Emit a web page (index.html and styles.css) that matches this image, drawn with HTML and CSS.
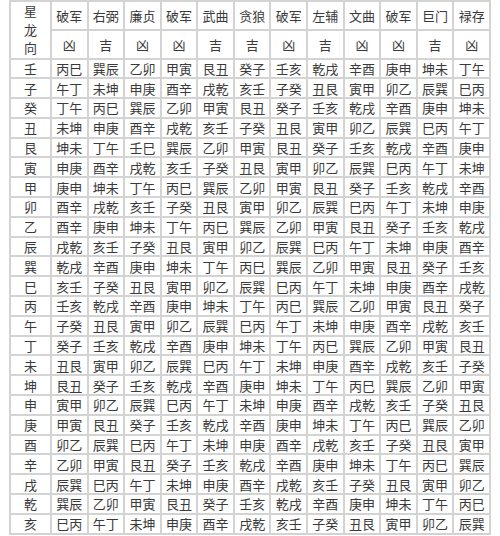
FILE: index.html
```html
<!DOCTYPE html>
<html lang="zh-CN">
<head>
<meta charset="utf-8">
<link rel="stylesheet" href="styles.css">
</head>
<body>
<table class="grid">
<colgroup><col class="c-first"><col span="12" class="c-cell"></colgroup>
<tr class="r-head"><td rowspan="2" class="corner">星<br>龙<br>向</td><td>破军</td><td>右弼</td><td>廉贞</td><td>破军</td><td>武曲</td><td>贪狼</td><td>破军</td><td>左辅</td><td>文曲</td><td>破军</td><td>巨门</td><td>禄存</td></tr>
<tr class="r-luck"><td>凶</td><td>吉</td><td>凶</td><td>凶</td><td>吉</td><td>吉</td><td>凶</td><td>吉</td><td>凶</td><td>凶</td><td>吉</td><td>凶</td></tr>
<tr><td>壬</td><td>丙巳</td><td>巽辰</td><td>乙卯</td><td>甲寅</td><td>艮丑</td><td>癸子</td><td>壬亥</td><td>乾戌</td><td>辛酉</td><td>庚申</td><td>坤未</td><td>丁午</td></tr>
<tr><td>子</td><td>午丁</td><td>未坤</td><td>申庚</td><td>酉辛</td><td>戌乾</td><td>亥壬</td><td>子癸</td><td>丑艮</td><td>寅甲</td><td>卯乙</td><td>辰巽</td><td>巳丙</td></tr>
<tr><td>癸</td><td>丁午</td><td>丙巳</td><td>巽辰</td><td>乙卯</td><td>甲寅</td><td>艮丑</td><td>癸子</td><td>壬亥</td><td>乾戌</td><td>辛酉</td><td>庚申</td><td>坤未</td></tr>
<tr><td>丑</td><td>未坤</td><td>申庚</td><td>酉辛</td><td>戌乾</td><td>亥壬</td><td>子癸</td><td>丑艮</td><td>寅甲</td><td>卯乙</td><td>辰巽</td><td>巳丙</td><td>午丁</td></tr>
<tr><td>艮</td><td>坤未</td><td>丁午</td><td>壬巳</td><td>巽辰</td><td>乙卯</td><td>甲寅</td><td>艮丑</td><td>癸子</td><td>壬亥</td><td>乾戌</td><td>辛酉</td><td>庚申</td></tr>
<tr><td>寅</td><td>申庚</td><td>酉辛</td><td>戌乾</td><td>亥壬</td><td>子癸</td><td>丑艮</td><td>寅甲</td><td>卯乙</td><td>辰巽</td><td>巳丙</td><td>午丁</td><td>未坤</td></tr>
<tr><td>甲</td><td>庚申</td><td>坤未</td><td>丁午</td><td>丙巳</td><td>巽辰</td><td>乙卯</td><td>甲寅</td><td>艮丑</td><td>癸子</td><td>壬亥</td><td>乾戌</td><td>辛酉</td></tr>
<tr><td>卯</td><td>酉辛</td><td>戌乾</td><td>亥壬</td><td>子癸</td><td>丑艮</td><td>寅甲</td><td>卯乙</td><td>辰巽</td><td>巳丙</td><td>午丁</td><td>未坤</td><td>申庚</td></tr>
<tr><td>乙</td><td>酉辛</td><td>庚申</td><td>坤未</td><td>丁午</td><td>丙巳</td><td>巽辰</td><td>乙卯</td><td>甲寅</td><td>艮丑</td><td>癸子</td><td>壬亥</td><td>乾戌</td></tr>
<tr><td>辰</td><td>戌乾</td><td>亥壬</td><td>子癸</td><td>丑艮</td><td>寅甲</td><td>卯乙</td><td>辰巽</td><td>巳丙</td><td>午丁</td><td>未坤</td><td>申庚</td><td>酉辛</td></tr>
<tr><td>巽</td><td>乾戌</td><td>辛酉</td><td>庚申</td><td>坤未</td><td>丁午</td><td>丙巳</td><td>巽辰</td><td>乙卯</td><td>甲寅</td><td>艮丑</td><td>癸子</td><td>壬亥</td></tr>
<tr><td>巳</td><td>亥壬</td><td>子癸</td><td>丑艮</td><td>寅甲</td><td>卯乙</td><td>辰巽</td><td>巳丙</td><td>午丁</td><td>未坤</td><td>申庚</td><td>酉辛</td><td>戌乾</td></tr>
<tr><td>丙</td><td>壬亥</td><td>乾戌</td><td>辛酉</td><td>庚申</td><td>坤未</td><td>丁午</td><td>丙巳</td><td>巽辰</td><td>乙卯</td><td>甲寅</td><td>艮丑</td><td>癸子</td></tr>
<tr><td>午</td><td>子癸</td><td>丑艮</td><td>寅甲</td><td>卯乙</td><td>辰巽</td><td>巳丙</td><td>午丁</td><td>未坤</td><td>申庚</td><td>酉辛</td><td>戌乾</td><td>亥壬</td></tr>
<tr><td>丁</td><td>癸子</td><td>壬亥</td><td>乾戌</td><td>辛酉</td><td>庚申</td><td>坤未</td><td>丁午</td><td>丙巳</td><td>巽辰</td><td>乙卯</td><td>甲寅</td><td>艮丑</td></tr>
<tr><td>未</td><td>丑艮</td><td>寅甲</td><td>卯乙</td><td>辰巽</td><td>巳丙</td><td>午丁</td><td>未坤</td><td>申庚</td><td>酉辛</td><td>戌乾</td><td>亥壬</td><td>子癸</td></tr>
<tr><td>坤</td><td>艮丑</td><td>癸子</td><td>壬亥</td><td>乾戌</td><td>辛酉</td><td>庚申</td><td>坤未</td><td>丁午</td><td>丙巳</td><td>巽辰</td><td>乙卯</td><td>甲寅</td></tr>
<tr><td>申</td><td>寅甲</td><td>卯乙</td><td>辰巽</td><td>巳丙</td><td>午丁</td><td>未坤</td><td>申庚</td><td>酉辛</td><td>戌乾</td><td>亥壬</td><td>子癸</td><td>丑艮</td></tr>
<tr><td>庚</td><td>甲寅</td><td>艮丑</td><td>癸子</td><td>壬亥</td><td>乾戌</td><td>辛酉</td><td>庚申</td><td>坤未</td><td>丁午</td><td>丙巳</td><td>巽辰</td><td>乙卯</td></tr>
<tr><td>酉</td><td>卯乙</td><td>辰巽</td><td>巳丙</td><td>午丁</td><td>未坤</td><td>申庚</td><td>酉辛</td><td>戌乾</td><td>亥壬</td><td>子癸</td><td>丑艮</td><td>寅甲</td></tr>
<tr><td>辛</td><td>乙卯</td><td>甲寅</td><td>艮丑</td><td>癸子</td><td>壬亥</td><td>乾戌</td><td>辛酉</td><td>庚申</td><td>坤未</td><td>丁午</td><td>丙巳</td><td>巽辰</td></tr>
<tr><td>戌</td><td>辰巽</td><td>巳丙</td><td>午丁</td><td>未坤</td><td>申庚</td><td>酉辛</td><td>戌乾</td><td>亥壬</td><td>子癸</td><td>丑艮</td><td>寅甲</td><td>卯乙</td></tr>
<tr><td>乾</td><td>巽辰</td><td>乙卯</td><td>甲寅</td><td>艮丑</td><td>癸子</td><td>壬亥</td><td>乾戌</td><td>辛酉</td><td>庚申</td><td>坤未</td><td>丁午</td><td>丙巳</td></tr>
<tr><td>亥</td><td>巳丙</td><td>午丁</td><td>未坤</td><td>申庚</td><td>酉辛</td><td>戌乾</td><td>亥壬</td><td>子癸</td><td>丑艮</td><td>寅甲</td><td>卯乙</td><td>辰巽</td></tr>
</table>
</body>
</html>
```
FILE: styles.css
```css
html, body {
  background: #ffffff;
}
body {
  margin: 0 0 0 9px;
  font-family: "Noto Sans CJK SC", "Noto Sans", sans-serif;
  color: #3a3a3a;
}
.grid {
  border-collapse: collapse;
  table-layout: fixed;
  width: 480px;
  font-size: 13px;
}
.c-first {
  width: 41px;
}
.c-cell {
  width: 36.58px;
}
.grid td {
  border: 2px solid #d3d3d3;
  padding: 0;
  text-align: center;
  vertical-align: middle;
  height: 19.8px;
  line-height: 15px;
  white-space: nowrap;
  box-sizing: border-box;
}
.grid .r-head td,
.grid .r-luck td {
  height: 28.5px;
}
.grid td.corner {
  line-height: 18.5px;
  white-space: normal;
}
```
